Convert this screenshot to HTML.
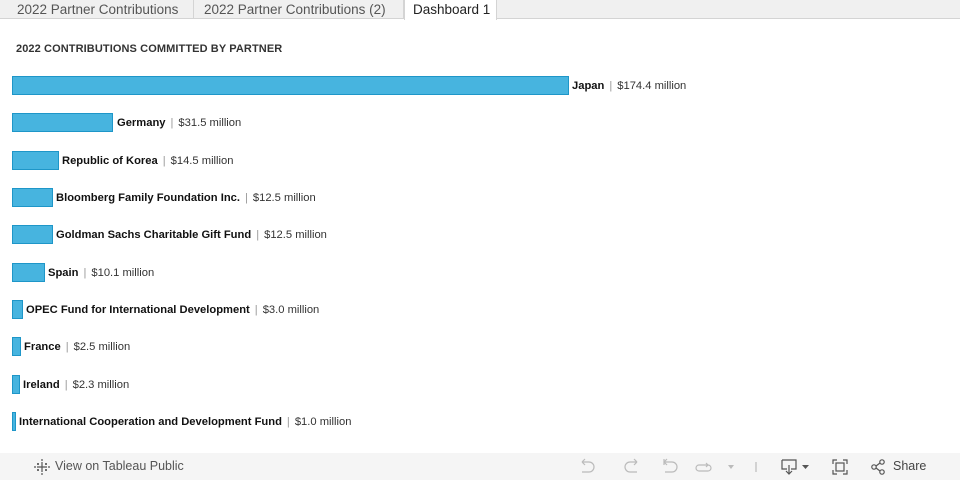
<!DOCTYPE html>
<html><head><meta charset="utf-8"><style>
*{margin:0;padding:0;box-sizing:border-box}
body{width:960px;height:480px;background:#fff;font-family:"Liberation Sans",sans-serif;position:relative;overflow:hidden;color:#333}
.tabs{position:absolute;left:0;top:0;width:960px;height:19px;background:#f0f0f0;border-bottom:1px solid #d4d4d4}
.tab{position:absolute;top:0;height:19px;font-size:13.5px;line-height:19px;color:#555;padding:0 6px;border-right:1px solid #d4d4d4;white-space:nowrap;overflow:hidden}
.tab.act{background:#fff;color:#222;height:20px;border-left:1px solid #d4d4d4}
h1{position:absolute;left:16px;top:43px;font-size:11px;font-weight:bold;color:#333;letter-spacing:.1px}
.bar{position:absolute;left:12px;height:19px;background:#47b4df;border:1px solid #1e96c8}
.lbl{position:absolute;font-size:11.2px;line-height:19px;color:#333;white-space:nowrap;margin-top:1px}
.lbl b{color:#111}
.lbl span{color:#999;margin:0 5px}
.foot{position:absolute;left:0;top:453px;width:960px;height:27px;background:#f5f5f5;font-size:12.5px;color:#555}
.foot .t{position:absolute;top:6px}
svg{position:absolute}
</style></head><body>
<div class="tabs">
<div class="tab" style="left:0;width:194px;padding-left:17px">2022 Partner Contributions</div>
<div class="tab" style="left:194px;width:210px;padding-left:10px">2022 Partner Contributions (2)</div>
<div class="tab act" style="left:404px;width:93px;padding-left:8px">Dashboard 1</div>
</div>
<h1>2022 CONTRIBUTIONS COMMITTED BY PARTNER</h1>

<div class="bar" style="top:76px;width:557px"></div><div class="lbl" style="left:572px;top:76px"><b>Japan</b><span>|</span>$174.4 million</div>
<div class="bar" style="top:113px;width:101px"></div><div class="lbl" style="left:117px;top:113px"><b>Germany</b><span>|</span>$31.5 million</div>
<div class="bar" style="top:151px;width:47px"></div><div class="lbl" style="left:62px;top:151px"><b>Republic of Korea</b><span>|</span>$14.5 million</div>
<div class="bar" style="top:188px;width:41px"></div><div class="lbl" style="left:56px;top:188px"><b>Bloomberg Family Foundation Inc.</b><span>|</span>$12.5 million</div>
<div class="bar" style="top:225px;width:41px"></div><div class="lbl" style="left:56px;top:225px"><b>Goldman Sachs Charitable Gift Fund</b><span>|</span>$12.5 million</div>
<div class="bar" style="top:263px;width:33px"></div><div class="lbl" style="left:48px;top:263px"><b>Spain</b><span>|</span>$10.1 million</div>
<div class="bar" style="top:300px;width:11px"></div><div class="lbl" style="left:26px;top:300px"><b>OPEC Fund for International Development</b><span>|</span>$3.0 million</div>
<div class="bar" style="top:337px;width:9px"></div><div class="lbl" style="left:24px;top:337px"><b>France</b><span>|</span>$2.5 million</div>
<div class="bar" style="top:375px;width:8px"></div><div class="lbl" style="left:23px;top:375px"><b>Ireland</b><span>|</span>$2.3 million</div>
<div class="bar" style="top:412px;width:4px"></div><div class="lbl" style="left:19px;top:412px"><b>International Cooperation and Development Fund</b><span>|</span>$1.0 million</div>

<div class="foot">
<svg style="left:34px;top:6px" width="16" height="16" viewBox="0 0 16 16" stroke="#555" stroke-width="1.2" fill="none"><path d="M8 3v10M3 8h10M8 0v2M8 14v2M0 8h2M14 8h2M4 4v2M3 5h2M12 4v2M11 5h2M4 10v2M3 11h2M12 10v2M11 11h2"/></svg>
<div class="t" style="left:55px">View on Tableau Public</div>
<svg style="left:578px;top:5px" width="240" height="18" viewBox="0 0 240 18" stroke="#bbb" stroke-width="1.2" fill="none">
<path d="M4 4h7a5 5 0 0 1 0 10H4M4 4l3-3M4 4l3 3"/>
<path d="M59 4h-7a5 5 0 0 0 0 10h7M59 4l-3-3M59 4l-3 3"/>
<path d="M86 4h8a5 5 0 0 1 0 10h-7M86 1v6M86 4l3-3M86 4l3 3"/>
<path d="M130 7h-9a3 3 0 0 0 0 6h9a3 3 0 0 0 0-6M128 5l2 2-2 2"/>
<path d="M150 7h6l-3 4z" fill="#bbb" stroke="none"/>
<path d="M178 4v10"/>
</svg>
<svg style="left:780px;top:5px" width="180" height="18" viewBox="0 0 180 18" stroke="#555" stroke-width="1.2" fill="none">
<path d="M2 2h14v9h-5M7 11H2V2M9 7v9M6 13l3 3 3-3"/>
<path d="M22 7h7l-3.5 4z" fill="#555" stroke="none"/>
<path d="M53 6V2h4M63 2h4v4M67 12v4h-4M57 16h-4v-4"/><rect x="56" y="5" width="8" height="8"/>
<circle cx="94" cy="9" r="2.2"/><circle cx="102" cy="4" r="2.2"/><circle cx="102" cy="14" r="2.2"/><path d="M96 8l4-3M96 10l4 3"/>
</svg>
<div class="t" style="left:893px;color:#444">Share</div>
</div>
</body></html>
